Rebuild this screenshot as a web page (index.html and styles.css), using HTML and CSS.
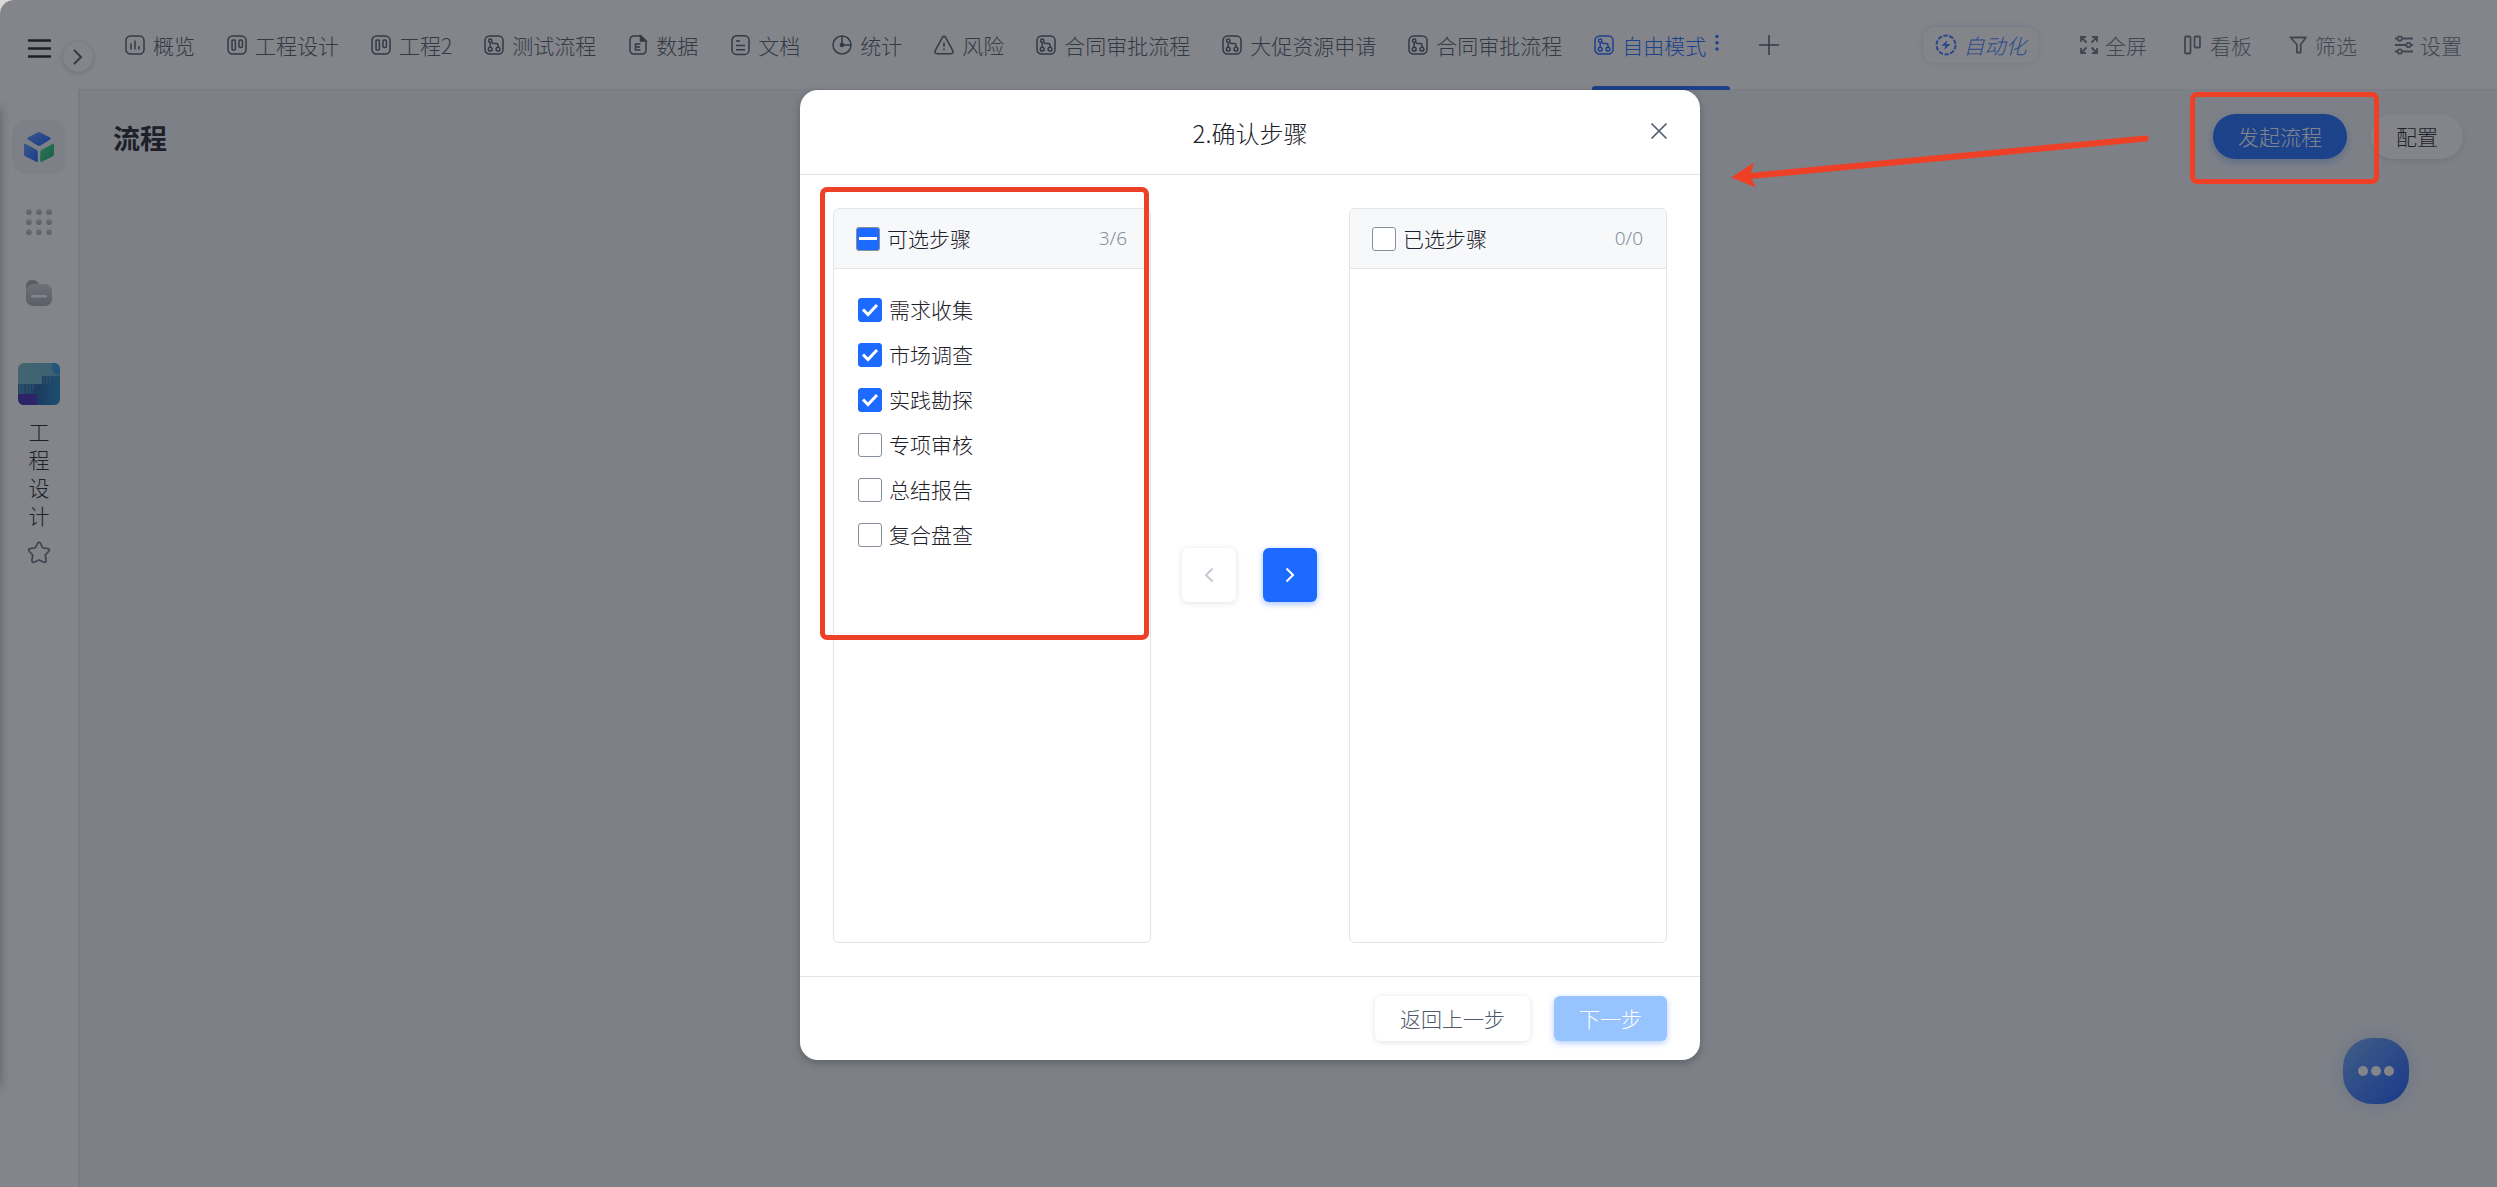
FILE: index.html
```html
<!DOCTYPE html>
<html lang="zh-CN">
<head>
<meta charset="utf-8">
<title>流程</title>
<link rel="stylesheet" href="styles.css">
</head>
<body>
<svg class="defs" width="0" height="0" aria-hidden="true">
  <defs>
    <linearGradient id="gBlue" x1="0" y1="0" x2="1" y2="1"><stop offset="0" stop-color="#5a9bff"/><stop offset="1" stop-color="#1c5aff"/></linearGradient>
    <linearGradient id="gGreen" x1="0" y1="0" x2="1" y2="1"><stop offset="0" stop-color="#44e09a"/><stop offset="1" stop-color="#10a85c"/></linearGradient>
    <linearGradient id="gGrey" x1="0" y1="0" x2="0" y2="1"><stop offset="0" stop-color="#d0d3d8"/><stop offset="1" stop-color="#a5a9af"/></linearGradient>
    <linearGradient id="gTeal" x1="0" y1="0" x2="1" y2="0"><stop offset="0" stop-color="#74b8c4"/><stop offset="1" stop-color="#5faed0"/></linearGradient>
    <linearGradient id="gSea" x1="0" y1="0" x2="1" y2="0"><stop offset="0" stop-color="#2f78ae"/><stop offset=".5" stop-color="#1b5fa4"/><stop offset="1" stop-color="#2288c6"/></linearGradient>
    <symbol id="i-flow" viewBox="0 0 20 20"><rect x="1" y="1" width="18" height="18" rx="4.5"/><circle cx="6.2" cy="5.8" r="1.7"/><circle cx="6.2" cy="14.2" r="1.9"/><circle cx="14" cy="14.2" r="1.9"/><path d="M6.2 7.5v4.800M7.500 7l1.500 1.600h3.500q1.500 0 1.500 1.500v2.200"/></symbol>
    <symbol id="i-board" viewBox="0 0 20 20"><rect x="1" y="1" width="18" height="18" rx="4.5"/><rect x="5" y="5" width="3.4" height="10" rx="1"/><rect x="12" y="5" width="3.4" height="7.4" rx="1"/></symbol>
    <symbol id="i-chart" viewBox="0 0 20 20"><rect x="1" y="1" width="18" height="18" rx="4.5"/><path d="M6 8.5v6M10 5.5v9M14 11v3.5"/></symbol>
  </defs>
</svg>
<div class="screen">
  <aside class="sidebar">
    <svg class="menu" width="23" height="19" viewBox="0 0 23 19"><path d="M1 1.5h21M1 9.5h21M1 17.5h21"/></svg>
    <div class="logo"><svg width="30" height="30" viewBox="0 0 30 30"><path d="M13.500.4q1.500-.8 3 0l9.600 5.200q1.400.9 0 1.800l-9.600 6.100q-1.500.9-3 0L3.900 7.400q-1.400-.9 0-1.800z" fill="url(#gBlue)"/><path d="M0 13q0-1.800 1.800-1l10.600 5.700q1.400.8 1.400 2.400v8.600q0 1.700-1.600 1L1.600 24.500Q0 23.600 0 22z" fill="url(#gBlue)"/><path d="M30 13q0-1.800-1.800-1l-10.600 5.700q-1.400.8-1.400 2.400v8.600q0 1.700 1.600 1l10.600-5.200q1.600-.9 1.600-2.500z" fill="url(#gGreen)"/></svg></div>
    <svg class="apps" width="26" height="26" viewBox="0 0 26 26" fill="url(#gGrey)"><circle cx="2.900" cy="2.900" r="2.900"/><circle cx="13" cy="2.900" r="2.900"/><circle cx="23.100" cy="2.900" r="2.900"/><circle cx="2.900" cy="13" r="2.900"/><circle cx="13" cy="13" r="2.900"/><circle cx="23.100" cy="13" r="2.900"/><circle cx="2.900" cy="23.100" r="2.900"/><circle cx="13" cy="23.100" r="2.900"/><circle cx="23.100" cy="23.100" r="2.900"/></svg>
    <svg class="folder" width="26" height="26" viewBox="0 0 26 26"><path d="M0 6Q0 0 6 0q5 0 7 4v8H0z" fill="#a3a7ad"/><rect x="0" y="4" width="26" height="22" rx="7" fill="url(#gGrey)"/><path d="M6.500 16.300h13" stroke="#fff" stroke-width="2.600" stroke-linecap="round"/></svg>
    <svg class="cover" width="42" height="42" viewBox="0 0 42 42"><rect width="42" height="42" fill="url(#gTeal)"/><path d="M0 21h24v-8h18v29H0z" fill="url(#gSea)"/><path d="M2 21v10M5 21v10M9 21v10M12 22v8M15 21v6M26 13v8M29 13v8M32 13v6" stroke="#66aebf" stroke-width="1" opacity=".6"/><path d="M0 31h19v11H0z" fill="#4227b5"/><path d="M34 0h8v13q-9-2-8-13z" fill="#2b92db"/></svg>
    <div class="project"><span>工</span><span>程</span><span>设</span><span>计</span></div>
    <svg class="star" width="24" height="24" viewBox="0 0 24 24"><path d="M10.600 2.200q1.400-1.800 2.800 0l2.200 4.600 5.300.9q2.300.6.900 2.600l-3.500 3.700.8 5.500q-.1 2.300-2.300 1.700L12 18.900l-4.800 2.300q-2.200.6-2.300-1.700l.8-5.500-3.500-3.700q-1.400-2 .9-2.600l5.300-.9z"/></svg>
  </aside>
  <button class="toggle"><svg width="10" height="16" viewBox="0 0 10 16"><path d="M1.500 1.500 8 8l-6.500 6.500"/></svg></button>
  <div class="main">
    <header class="topbar">
      <nav class="tabs">
        <a class="tab"><svg class="ic"><use href="#i-chart"/></svg>概览</a>
        <a class="tab"><svg class="ic"><use href="#i-board"/></svg>工程设计</a>
        <a class="tab"><svg class="ic"><use href="#i-board"/></svg>工程2</a>
        <a class="tab"><svg class="ic"><use href="#i-flow"/></svg>测试流程</a>
        <a class="tab"><svg class="ic" viewBox="0 0 20 20"><path d="M13 1H6Q2 1 2 5v10q0 4 4 4h8q4 0 4-4V6z"/><path d="M12.500 1v5H18z" fill="currentColor"/><path d="M12.500 9h-5v6h5M7.500 12h4.500"/></svg>数据</a>
        <a class="tab"><svg class="ic" viewBox="0 0 20 20"><rect x="2" y=".8" width="17" height="18.600" rx="4.500"/><path d="M6 6h4M6 10.500h9M6 14.800h9"/></svg>文档</a>
        <a class="tab"><svg class="ic" viewBox="0 0 20 20"><circle cx="10" cy="10" r="9"/><path d="M10 1v9h9"/><circle cx="10" cy="10" r="1.600" fill="currentColor"/></svg>统计</a>
        <a class="tab"><svg class="ic" viewBox="0 0 20 20"><path d="M8.400 2.400q1.600-2.200 3.200 0l7.200 13.200q1 2.900-1.800 3.100H3q-2.800-.2-1.800-3.100z"/><path d="M10 7.500v4.200M10 13.500v1.800"/></svg>风险</a>
        <a class="tab"><svg class="ic"><use href="#i-flow"/></svg>合同审批流程</a>
        <a class="tab"><svg class="ic"><use href="#i-flow"/></svg>大促资源申请</a>
        <a class="tab"><svg class="ic"><use href="#i-flow"/></svg>合同审批流程</a>
        <a class="tab active"><svg class="ic"><use href="#i-flow"/></svg>自由模式<svg class="more" width="4" height="18" viewBox="0 0 4 18"><circle cx="2" cy="2.500" r="1.700"/><circle cx="2" cy="8.700" r="1.700"/><circle cx="2" cy="15" r="1.700"/></svg></a>
        <svg class="ic plus" viewBox="0 0 20 20"><path d="M10 0v20M0 10h20"/></svg>
      </nav>
      <div class="tools">
        <button class="auto"><svg width="22" height="22" viewBox="0 0 22 22"><circle cx="11" cy="11" r="9.500" fill="none" stroke="currentColor" stroke-width="2" stroke-dasharray="4.500 1.470"/><path d="m12.200 6.200-6 5.600h4l-.8 4 6.200-5.800h-4.200z" fill="currentColor"/></svg><i>自动化</i></button>
        <a class="tool"><svg class="ic" viewBox="0 0 20 20"><path d="M2 7V2h5M2.500 2.500l5 5M13 2h5v5M17.500 2.500l-5 5M2 13v5h5M2.500 17.500l5-5M18 13v5h-5M17.500 17.500l-5-5"/></svg>全屏</a>
        <a class="tool"><svg class="ic" viewBox="0 0 20 20"><rect x="1" y="1.500" width="5.500" height="17" rx="1"/><rect x="10.500" y="1.500" width="5.500" height="11" rx="1"/></svg>看板</a>
        <a class="tool"><svg class="ic" viewBox="0 0 20 20"><path d="M1.500 2.500h15.500l-5.300 7v8H7.900v-8z" stroke-linejoin="round"/></svg>筛选</a>
        <a class="tool"><svg class="ic" viewBox="0 0 20 20"><path d="M1 3.500h2.500M8 3.500h11M1 10h11M17 10h2M1 16.500h2.500M8 16.500h11"/><circle cx="5.800" cy="3.500" r="2.200"/><circle cx="14.500" cy="10" r="2.200"/><circle cx="5.800" cy="16.500" r="2.200"/></svg>设置</a>
      </div>
    </header>
    <section class="page">
      <h1>流程</h1>
      <div class="actions"><button class="pill primary">发起流程</button><button class="pill">配置</button></div>
    </section>
  </div>
  <button class="chat"><span></span><span></span><span></span></button>

  <div class="mask">
    <div class="modal">
      <div class="modal-head"><span>2.确认步骤</span><svg class="close" width="18" height="18" viewBox="0 0 18 18"><path d="m1.500 1.500 15 15M16.500 1.500l-15 15"/></svg></div>
      <div class="modal-body">
        <div class="panel">
          <div class="panel-head"><b class="box half"></b><span>可选步骤</span><em>3/6</em></div>
          <ul>
            <li><b class="box on"><svg width="18" height="14" viewBox="0 0 18 14"><path d="m2 6.500 5 5L16 2"/></svg></b><span>需求收集</span></li>
            <li><b class="box on"><svg width="18" height="14" viewBox="0 0 18 14"><path d="m2 6.500 5 5L16 2"/></svg></b><span>市场调查</span></li>
            <li><b class="box on"><svg width="18" height="14" viewBox="0 0 18 14"><path d="m2 6.500 5 5L16 2"/></svg></b><span>实践勘探</span></li>
            <li><b class="box"></b><span>专项审核</span></li>
            <li><b class="box"></b><span>总结报告</span></li>
            <li><b class="box"></b><span>复合盘查</span></li>
          </ul>
        </div>
        <div class="moves">
          <button class="move"><svg width="10" height="16" viewBox="0 0 10 16"><path d="M8.500 1.500 2 8l6.500 6.500"/></svg></button>
          <button class="move go"><svg width="10" height="16" viewBox="0 0 10 16"><path d="M1.500 1.500 8 8l-6.500 6.500"/></svg></button>
        </div>
        <div class="panel">
          <div class="panel-head"><b class="box"></b><span>已选步骤</span><em>0/0</em></div>
        </div>
      </div>
      <div class="modal-foot"><button class="btn back">返回上一步</button><button class="btn next">下一步</button></div>
    </div>
  </div>
  <div class="edge"></div>
  <div class="note note-steps"></div>
  <div class="note note-start"></div>
  <svg class="arrow" width="425" height="60" viewBox="0 0 425 60"><path d="M415.500 10.500 20 48" fill="none" stroke="#ee4026" stroke-width="6.200" stroke-linecap="round"/><path d="M1 49.500 24 34.500 20 48 26 59.500z" fill="#ee4026"/></svg>
</div>
</body>
</html>
```
FILE: styles.css
```css
* { box-sizing: border-box; }
body { margin: 0; background: #d9d9d9; font-family: "Noto Sans CJK SC", sans-serif; font-weight: 300; font-size: 21px; color: #1d2129; }
button { border: 0; padding: 0; font: inherit; color: inherit; background: #fff; }
h1, ul { margin: 0; padding: 0; }
.defs { position: absolute; }
svg { display: block; flex: none; }
.screen { position: relative; display: flex; width: 2497px; height: 1187px; border-radius: 14px 0 0 0; overflow: hidden; background: #f2f5f8; }

.sidebar { width: 78px; background: #fff; display: flex; flex-direction: column; align-items: center; flex: none; box-shadow: 1px 0 3px rgba(0,0,0,.1); }
.menu { margin-top: 39px; stroke: #1d2129; stroke-width: 2.6; stroke-linecap: round; }
.logo { margin-top: 62px; width: 54px; height: 54px; border-radius: 14px; background: #f2f5f8; display: flex; align-items: center; justify-content: center; }
.apps { margin-top: 35px; }
.folder { margin-top: 45px; }
.cover { margin-top: 57px; border-radius: 6px; }
.project { margin-top: 12px; display: flex; flex-direction: column; line-height: 28px; }
.star { margin-top: 12px; fill: none; stroke: #6b7280; stroke-width: 1.800; }
.toggle { position: absolute; left: 63px; top: 42px; width: 30px; height: 30px; border-radius: 50%; display: flex; align-items: center; justify-content: center; box-shadow: 0 1px 5px rgba(0,0,0,.22); }
.toggle path { fill: none; stroke: #4e5969; stroke-width: 2; stroke-linecap: round; }

.main { flex: 1; }
.topbar { height: 90px; padding: 0 34px 0 47px; background: #fff; display: flex; align-items: stretch; justify-content: space-between; border-bottom: 1px solid #eceff2; }
.tabs { display: flex; gap: 32px; color: #4e5969; white-space: nowrap; }
.tab { display: flex; align-items: center; gap: 8px; line-height: 30px; padding-top: 1px; }
.ic { width: 20px; height: 20px; fill: none; stroke: currentColor; stroke-width: 1.500; overflow: visible; }
.tab .ic { margin-top: -1px; }
.tab.active { position: relative; color: #1c6aff; }
.tab.active::after { content: ""; position: absolute; left: -2px; right: -11px; bottom: -1px; height: 4px; border-radius: 3px 3px 0 0; background: #1c6aff; }
.more { margin: -4px 0 0 1px; fill: currentColor; }
.plus { align-self: center; margin-left: 8px; }
.tools { display: flex; align-items: center; color: #6b7785; }
.auto { width: 115px; height: 36px; border-radius: 12px; display: flex; align-items: center; justify-content: center; gap: 7px; color: #3b7bff; box-shadow: 0 0 6px rgba(28,106,255,.2); margin-right: 41px; }
.auto i { line-height: 30px; padding-top: 1px; }
.tool { display: flex; align-items: center; gap: 6px; width: 105px; padding-top: 1px; line-height: 30px; }
.tool:last-child { width: 69px; }
.tool .ic { margin-top: -1px; stroke-width: 1.800; }
.page { display: flex; justify-content: space-between; padding: 24px 34px 0 35px; }
h1 { font-size: 27px; font-weight: 700; line-height: 48px; }
.actions { display: flex; gap: 24px; }
.pill { height: 45px; padding: 0 25px 2px; border-radius: 23px; box-shadow: 0 2px 6px rgba(0,0,0,.1); }
.pill.primary { background: #1c6aff; color: #fff; box-shadow: 0 3px 8px rgba(28,106,255,.35); }
.chat { position: absolute; left: 2343px; top: 1038px; width: 66px; height: 66px; border-radius: 29px; display: flex; align-items: center; justify-content: center; gap: 3px; background: linear-gradient(135deg, #6fa8f5, #1457ff); box-shadow: 0 0 20px rgba(28,90,200,.2); }
.chat span { width: 10px; height: 10px; border-radius: 50%; background: #fff; }

.mask { position: absolute; inset: 0; background: rgba(29,33,41,.55); display: flex; align-items: flex-start; justify-content: center; padding: 90px 0 0 3px; }
.edge { position: absolute; left: -6px; top: 108px; width: 6px; height: 979px; box-shadow: 0 0 10px rgba(0,0,0,.35); }
.modal { width: 900px; height: 970px; border-radius: 18px; background: #fff; display: flex; flex-direction: column; box-shadow: 0 3px 8px rgba(0,0,0,.25); }
.modal-head { position: relative; height: 85px; border-bottom: 1px solid #e3e4e6; display: flex; align-items: center; justify-content: center; font-size: 24px; padding-top: 1px; }
.close { position: absolute; right: 32px; top: 32px; fill: none; stroke: #4e5969; stroke-width: 1.600; }
.modal-body { flex: 1; padding: 33px; display: flex; }
.panel { width: 318px; border: 1px solid #e3e4e6; border-radius: 6px; overflow: hidden; }
.panel-head { height: 60px; background: #f7f8fa; border-bottom: 1px solid #e3e4e6; padding: 0 23px 0 22px; display: flex; align-items: center; }
.panel-head span { margin-left: 7px; flex: 1; padding-bottom: 1px; }
.panel-head em { font-family: "Noto Sans"; font-style: normal; font-size: 19px; color: #86909c; padding-bottom: 1px; }
ul { list-style: none; padding: 18px 24px; }
li { height: 45px; display: flex; align-items: center; gap: 7px; line-height: 30px; }
li span { padding-bottom: 1px; }
.box { width: 24px; height: 24px; border: 1px solid #86909c; border-radius: 3px; background: #fff; display: flex; align-items: center; justify-content: center; flex: none; }
.box.on { background: #1c6aff; border-color: #1c6aff; }
.box.on path { fill: none; stroke: #fff; stroke-width: 3; }
.box.half { background: #1c6aff; }
.box.half::after { content: ""; width: 18px; height: 3px; background: #fff; }
.moves { flex: 1; display: flex; align-items: center; justify-content: center; gap: 27px; padding: 0 2px 1px 0; }
.move { width: 54px; height: 54px; border-radius: 6px; display: flex; align-items: center; justify-content: center; box-shadow: 0 1px 6px rgba(0,0,0,.12); }
.move path { fill: none; stroke: #c5cad3; stroke-width: 2; }
.move.go { background: #1c6aff; box-shadow: 0 2px 6px rgba(28,106,255,.4); }
.move.go path { stroke: #fff; }
.modal-foot { height: 84px; border-top: 1px solid #e3e4e6; padding: 0 33px; display: flex; align-items: center; justify-content: flex-end; gap: 24px; }
.btn { height: 45px; padding-bottom: 2px; border-radius: 6px; box-shadow: 0 1px 6px rgba(0,0,0,.12); }
.back { width: 155px; color: #4e5969; }
.next { width: 113px; background: #97c3ff; color: #fff; box-shadow: 0 2px 6px rgba(28,106,255,.35); }

.note { position: absolute; border: 5px solid #ee4026; border-radius: 7px; }
.note-steps { left: 820px; top: 187px; width: 329px; height: 453px; }
.note-start { left: 2190px; top: 92px; width: 189px; height: 92px; }
.arrow { position: absolute; left: 1730px; top: 127.500px; overflow: visible; }
```
